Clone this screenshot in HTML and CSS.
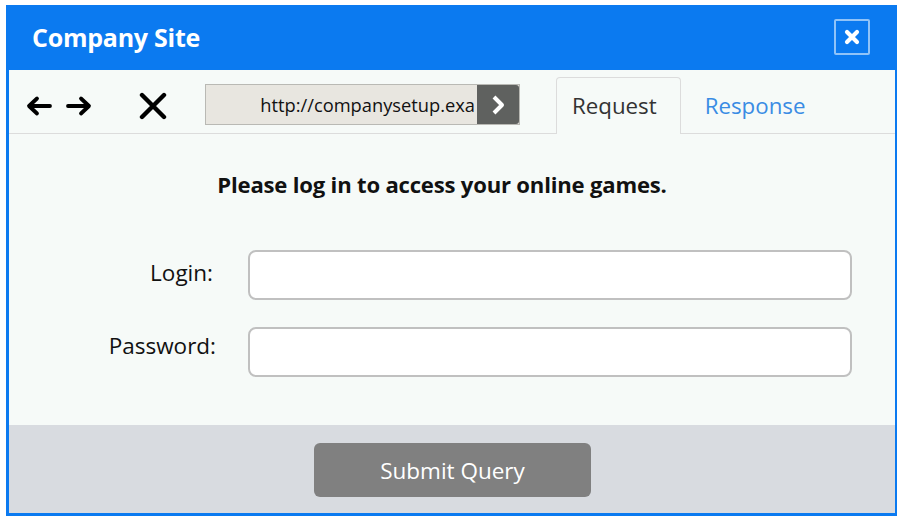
FILE: index.html
```html
<!DOCTYPE html>
<html>
<head>
<meta charset="utf-8">
<link rel="stylesheet" href="styles.css">
</head>
<body>
<div class="window">
  <div class="titlebar">
    <span class="title">Company Site</span>
    <span class="close">
      <svg width="18" height="18" viewBox="0 0 18 18"><path d="M4 4 L14 14 M14 4 L4 14" stroke="#fff" stroke-width="4.2" stroke-linecap="round"/></svg>
    </span>
  </div>
  <div class="toolbar">
    <div class="navs">
      <svg class="ico" width="28" height="22" viewBox="0 0 28 22"><path d="M25 11 H5 M12 3.5 L4 11 L12 18.5" fill="none" stroke="#000" stroke-width="3.8" stroke-linecap="round" stroke-linejoin="round"/></svg>
      <svg class="ico" width="28" height="22" viewBox="0 0 28 22"><path d="M3 11 H23 M16 3.5 L24 11 L16 18.5" fill="none" stroke="#000" stroke-width="3.8" stroke-linecap="round" stroke-linejoin="round"/></svg>
      <svg class="ico stop" width="28" height="28" viewBox="0 0 28 28"><path d="M3 3 L25 25 M25 3 L3 25" stroke="#000" stroke-width="4.4" stroke-linecap="round"/></svg>
    </div>
    <div class="url">
      <span class="url-text">http://companysetup.exa</span>
      <span class="go"><svg width="16" height="22" viewBox="0 0 16 22"><path d="M4 3 L12 11 L4 19" fill="none" stroke="#fff" stroke-width="4" stroke-linejoin="round"/></svg></span>
    </div>
    <div class="tabs">
      <span class="tab active">Request</span>
      <span class="tab">Response</span>
    </div>
  </div>
  <div class="main">
    <h1 class="heading">Please log in to access your online games.</h1>
    <div class="form">
      <label class="lbl lbl-login">Login:</label>
      <div class="field"></div>
      <label class="lbl lbl-pass">Password:</label>
      <div class="field"></div>
    </div>
  </div>
  <div class="footer">
    <button class="submit">Submit Query</button>
  </div>
</div>
</body>
</html>
```
FILE: styles.css
```css
html, body { margin: 0; padding: 0; background: #fff; }
body { font-family: "Open Sans", "Noto Sans", sans-serif; }
.window {
  margin: 5px 0 0 6px;
  width: 891px;
  height: 511px;
  box-sizing: border-box;
  border: 3px solid #0b7af0;
  border-top: 0;
  border-right-width: 2px;
  display: flex;
  flex-direction: column;
  background: #f6faf8;
}
.titlebar {
  height: 65px;
  margin: 0 -2px 0 -3px;
  background: #0b7af0;
  display: flex;
  align-items: center;
  justify-content: space-between;
  padding: 0 27px 0 26px;
  flex-shrink: 0;
}
.title { color: #fff; font-weight: 700; font-size: 25px; letter-spacing: -0.25px; margin-top: -2px; }
.close {
  width: 32px; height: 32px;
  border: 2px solid rgba(255,255,255,0.55);
  border-radius: 2px;
  display: flex; align-items: center; justify-content: center;
  margin-top: -1px;
}
.toolbar {
  height: 63px;
  border-bottom: 1px solid #dcdcdc;
  display: flex;
  align-items: stretch;
  flex-shrink: 0;
}
.navs { display: flex; align-items: center; padding-left: 16px; width: 180px; padding-top: 8px; }
.ico { display: block; }
.navs .ico + .ico { margin-left: 12px; }
.navs .stop { margin-left: 46px !important; }
.url {
  align-self: center;
  margin-top: 6px;
  width: 313px; height: 39px;
  background: #e8e6e0;
  border: 1px solid #b9b9b4;
  display: flex; justify-content: flex-end;
  box-sizing: content-box;
}
.url-text { font-size: 18.3px; color: #111; line-height: 39px; padding-right: 2px; white-space: nowrap; }
.go {
  width: 42px; background: #5f615f;
  display: flex; align-items: center; justify-content: center;
  border-radius: 0 3px 3px 0;
}
.tabs { display: flex; align-items: flex-end; margin-left: 36px; }
.tab { font-size: 22.3px; color: #3a8ce4; padding: 0 24px; height: 55px; line-height: 55px; box-sizing: border-box; }
.tab.active {
  color: #333;
  border: 1px solid #dcdcdc;
  border-bottom: 0;
  border-radius: 4px 4px 0 0;
  margin-bottom: -1px;
  background: #f6faf8;
  height: 57px;
  padding: 0 23px 0 15px;
}
.main { flex: 1; }
.heading { margin: 35px 20px 0 0; font-size: 22.1px; font-weight: 700; text-align: center; color: #111; letter-spacing: -0.2px; }
.form {
  display: grid;
  grid-template-columns: 207px 604px;
  column-gap: 32px;
  row-gap: 27px;
  margin-top: 51px;
  align-items: center;
}
.lbl { text-align: right; font-size: 22.5px; color: #111; }
.lbl-login { margin-top: -6px; margin-right: 3px; }
.lbl-pass { margin-top: -14px; }
.field { height: 46px; background: #fff; border: 2px solid #c0c0c0; border-radius: 8px; }
.footer {
  height: 88px; background: #d8dbe0;
  display: flex; justify-content: center; align-items: flex-start;
  flex-shrink: 0;
}
.submit {
  margin-top: 18px;
  margin-left: 1px;
  width: 277px; height: 54px;
  background: #808080; color: #fff;
  border: 0; border-radius: 6px;
  font-family: "Open Sans", "Noto Sans", sans-serif;
  font-size: 22.5px;
}
```
